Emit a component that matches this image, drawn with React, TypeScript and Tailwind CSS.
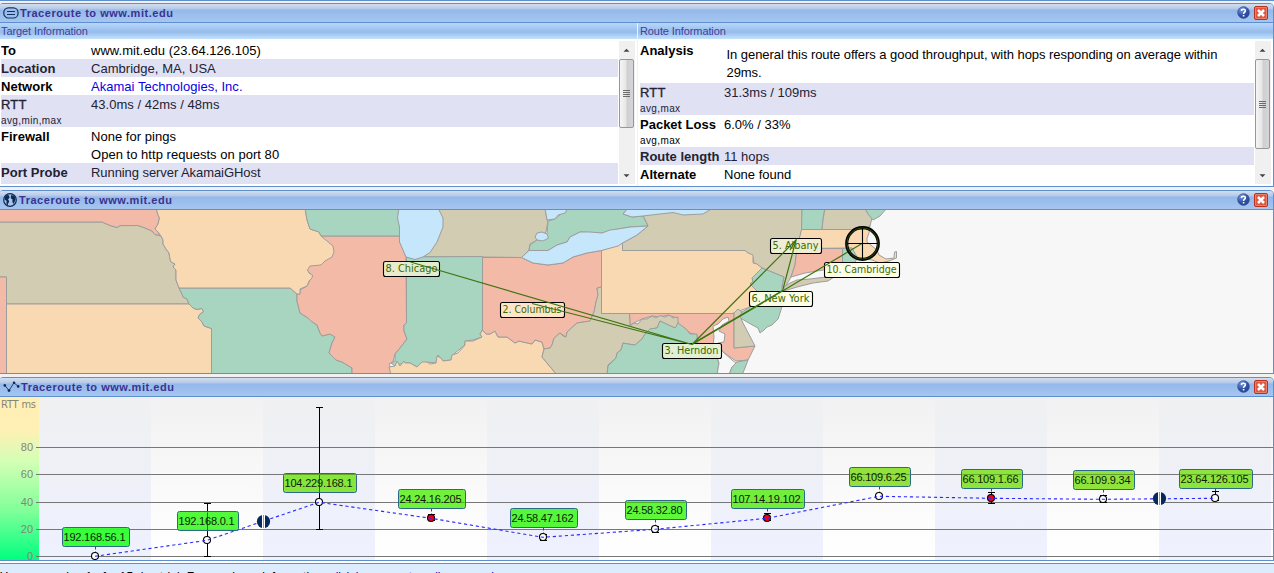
import React from "react";

const HelpIcon = () => (
  <svg width="13" height="13" viewBox="0 0 13 13">
    <defs>
      <radialGradient id="help" cx="0.35" cy="0.25" r="0.85">
        <stop offset="0" stopColor="#7d9bdc" />
        <stop offset="0.6" stopColor="#2f4fa5" />
        <stop offset="1" stopColor="#28418c" />
      </radialGradient>
    </defs>
    <circle cx="6.5" cy="6.5" r="5.9" fill="url(#help)" stroke="#41598f" strokeWidth="0.6" />
    <path d="M4.4 4.9C4.5 2.7 8.5 2.7 8.4 4.9C8.3 6.2 6.6 6.1 6.6 7.9" fill="none" stroke="#fff" strokeWidth="1.5" />
    <rect x="5.8" y="9" width="1.6" height="1.5" fill="#fff" />
  </svg>
);

const CloseIcon = () => (
  <svg width="14" height="14" viewBox="0 0 14 14">
    <rect x="0.5" y="0.5" width="13" height="13" rx="1.5" fill="#dc5a44" stroke="#b8321c" />
    <rect x="1.5" y="1.5" width="11" height="11" rx="0.5" fill="none" stroke="#ee9a86" strokeOpacity="0.6" />
    <path d="M4 4L10 10M10 4L4 10" stroke="#fff" strokeWidth="2.5" />
  </svg>
);

const ListIcon = () => (
  <svg width="16" height="12" viewBox="0 0 16 12" fill="none" stroke="#16335f" strokeWidth="1.2">
    <rect x="0.8" y="0.8" width="14.2" height="10.2" rx="4.6" />
    <path d="M4 4.5H12M4 7.5H12" strokeWidth="1" />
  </svg>
);

const GlobeIcon = () => (
  <svg width="14" height="14" viewBox="0 0 14 14">
    <circle cx="7" cy="7" r="6.3" fill="#a9c6ee" stroke="#0d2a55" strokeWidth="1.2" />
    <path d="M1.6 4L4 2L6.2 2.6L6.5 4.8L5 6.4L6.3 8.2L5.2 10.6L4.6 12.4L3.4 10.4L3.6 8L1.6 6.4Z" fill="#0d2a55" />
    <path d="M8 2L11.4 3L12.6 6L11.6 9L10.2 11L9.3 8.4L9.6 6.4L7.8 5.2Z" fill="#0d2a55" />
  </svg>
);

const ChartIcon = () => (
  <svg width="17" height="12" viewBox="0 0 17 12">
    <path d="M1.8 4.4L6 9.5L11 1.8L15.3 5.4" fill="none" stroke="#16335f" strokeWidth="0.9" />
    <g fill="#0d2a55">
      <circle cx="1.8" cy="4.4" r="1.3" />
      <circle cx="6" cy="9.6" r="1.4" />
      <circle cx="11" cy="1.8" r="1.3" />
      <circle cx="15.2" cy="5.4" r="1.3" />
    </g>
  </svg>
);

const Header = ({ icon, gap }: { icon: React.ReactNode; gap: string }) => (
  <div className="flex h-[19px] shrink-0 items-center border-b border-[#5f8fce] bg-[linear-gradient(to_bottom,#d3dff1_0px,#b4c8e8_5px,#93b8ea_6px,#a6c6f0_18px)] pl-[3px] pr-[5px]">
    {icon}
    <span className={`${gap} pt-px text-[11px] font-bold leading-[17px] tracking-[0.53px] text-[#3b3290]`}>Traceroute to www.mit.edu</span>
    <span className="ml-auto flex items-center gap-[4px] pb-px">
      <HelpIcon />
      <CloseIcon />
    </span>
  </div>
);

const Panel = ({ icon, gap, height, children }: { icon: React.ReactNode; gap: string; height: string; children: React.ReactNode }) => (
  <section className={`${height} flex shrink-0 flex-col overflow-hidden rounded-tl-[3px] rounded-tr-[5px] border-b border-r border-t border-[#5f8fce]`}>
    <Header icon={icon} gap={gap} />
    {children}
  </section>
);

const ScrollBar = ({ thumb }: { thumb: string }) => (
  <div className="flex h-[143px] w-[16px] shrink-0 flex-col items-start bg-[#f0f0f0]">
    <div className="flex h-[18px] w-[15px] items-center justify-center">
      <svg width="7" height="4" viewBox="0 0 7 4"><path d="M0.5 3.8L3.5 0.8L6.5 3.8Z" fill="#444" /></svg>
    </div>
    <div className={`${thumb} flex w-[15px] flex-col items-center justify-center gap-[1px] rounded-[2px] border border-[#979797] bg-[linear-gradient(to_right,#f5f5f5_0,#e7e7e8_45%,#cfcfd2_55%,#d6d6da_100%)]`}>
      {[0, 1, 2, 3].map((i) => <div key={i} className="h-px w-[7px] bg-[#6c6c6c]" />)}
    </div>
    <div className="mt-auto flex h-[17px] w-[15px] items-center justify-center">
      <svg width="7" height="4" viewBox="0 0 7 4"><path d="M0.5 0.2L3.5 3.2L6.5 0.2Z" fill="#444" /></svg>
    </div>
  </div>
);

type RowProps = { label: string; sub?: string; bold?: boolean; dark?: boolean; h: string; col: string; children: React.ReactNode };
const Row = ({ label, sub, bold = true, dark, h, col, children }: RowProps) => (
  <div className={`${h} flex shrink-0 overflow-hidden pt-px ${dark ? "bg-[#e0e1f3] text-[#222233]" : "text-black"}`}>
    <div className={`${col} shrink-0 whitespace-nowrap`}>
      <div className={`leading-[18px] ${bold ? "font-bold" : "tracking-[0.2px] [-webkit-text-stroke:0.3px]"}`}>{label}</div>
      {sub && <div className="text-[10px] leading-[14px] tracking-[0.38px]">{sub}</div>}
    </div>
    <div className="leading-[18px]">{children}</div>
  </div>
);

const SubHeader = ({ children }: { children: React.ReactNode }) => (
  <div className="h-[16px] shrink-0 bg-[linear-gradient(to_bottom,#b7d6fb_0,#9bc0ed_48%,#97bdec_58%,#c4e2fd_100%)] text-[11px] leading-[16px] tracking-[-0.1px] text-[#433f9c]">{children}</div>
);

const P = "#f4baa8", O = "#f9d9b2", K = "#d2ccb2", G = "#a8d5bf", W = "#c5e6fb", S = "#f7f7f7";
const regions: [string, string][] = [
  [K, "-2,222 102,222 110,225.5 117,227.5 120,225.6 138,225.5 145,228 152,231 155,234.5 161,236 163,240 163,244 166,249 169,253 170,259 171,262 175,264 173,267 176,270 176,280 179,288 182,294 183,297 187,299 189,304 6.5,304 6.5,277 -2,277"],
  [P, "-2,208 156,208 158,215 159.5,218 158,224 155,229 158,232 160,235.5 155,234.5 152,231 145,228 138,225.5 120,225.6 117,227.5 110,225.5 102,222 -2,222"],
  [P, "-2,277 6.5,277 6.5,375 -2,375"],
  [O, "6.5,304 189,304 193,308 197,309.5 202,308.5 203.5,312 200,314 198,318 202,322 204,326 211.5,328.5 211.5,375 6.5,375"],
  [G, "179,288 290,288 297,294 297,301 300,313 308,318 311,321 317,325 320,333 322,336 330,334 335,337 332,343 329,353 336,360 342,362 352,368 352,375 211.5,375 211.5,328.5 204,326 202,322 198,318 200,314 203.5,312 202,308.5 197,309.5 193,308 189,304 187,299 183,297 182,294"],
  [P, "321,236 399.5,236 400,242 406,257 406.5,323 404,325 404,331 407,339 400,348 395,354 393,362 389,364 391,368 391,375 352,375 352,368 342,362 336,360 329,353 332,343 335,337 330,334 322,336 320,333 317,325 311,321 308,318 300,313 297,301 297,294 300,294 300,290 307,286 312,276 307,270 309,266"],
  [O, "156,208 305,208 307,220 310,229 319,232 321,236 327,241 333,246 334,252 332,257 325,261 321,265 310,266 307.5,270 309,273 312.5,275 312,278 309,281 307,286 300,289 300,294 297,294 290,288 179,288 176,280 176,270 173,267 175,264 171,262 170,259 169,253 166,249 163,244 163,240 161,236 158,232 155,229 158,224 159.5,218 158,215"],
  [G, "305,208 400,208 400,236 321,236 319,232 310,229 307,220"],
  [K, "430,208 545,208 547,220 548,221 546,232 537,240 530,244 529,250 521.5,257.5 482,257 406,256.5"],
  [G, "406.5,257 482.5,256.5 482.5,330 480,334 482,337 473,340 465,341 465,345 455,353 451,360 443,361 438,355 436,363 427,362 417,367 410,363 403,363 395,366 391,363 395,361 395,354 400,348 407,339 404,331 404,325 406.5,323"],
  [O, "391,375 389,367 395,366 397,361 400,366 404,361 405,363 410,363 417,367 422,362 427,362 430,364 436,363 437,356 441,358 443,361 451,360 452,355 458,353 465,345 465,341 473,341 482,337 480,334 482.5,330 486,334 490,334 495,331 498,337 507,337 515,343 519,341 523,342 532,344 535,340 542,342 544,349 542,357 557,375"],
  [P, "482.5,257.5 521.5,257.5 533,263 548,265 563,263 573,257 587,253 601.5,250.5 601.5,287 597,288 598,295 596,302 594,312 590,321 577,323 567,332 566,337 560,333 554,338 552,345 550,348 544,349 542,342 535,340 532,344 523,342 519,341 515,343 507,337 498,337 495,331 490,334 486,334 482.5,330"],
  [P, "629.5,313.5 734,313.5 734,348 755,346 748,360 736,361 723,352 715,357 698,346 697,335 690,333 685,328 678,325 677,318 668,315 660,317 652,316 642,319 630,325"],
  [K, "544,349 550,348 552,345 554,338 560,333 563,336 566,337 567,332 577,323 590,321 594,312 596,302 598,295 597,288 601.5,287 601.5,313.5 629.5,313.5 630,326 634,323 638,324 642,319 647,319 652,316 656,318 660,315.5 665,317 669,315 673,318 678,317 678,325 675,328 660,321 657,328 650,329 645,334 642,339 635,345 628,344 623,343 621,350 617,353 616,358 608,365 607,375 557,375 542,357"],
  [G, "660,321 675,328 678,323 682,326 686,329 690,334 697,334 697,343 705,353 717,358 719,363 717,375 607,375 608,366 616,358 617,353 621,350 623,343 628,344 635,345 642,339 645,334 650,329 657,328"],
  [K, "622.5,243 637,235 648,226 643,216 673,208 802,208 802,229 797,248 795,265 791,277 784,289 782,286 784,277 762,268 754,263 753,257 745,250.5 622.5,250.5"],
  [O, "601.5,250.5 622.5,243 622.5,250.5 745,250.5 748,253 753,255 753,263 757,264 762,268 757,273 752,278 753,281 750,284 755,289 758,292 753,300 750,307 742,310 737,312 732,313.5 601.5,313.5"],
  [G, "762,268 784,277 782,286 782,291 784,300 780,313 778,319 772,325 767,327 764,330 760,333 758,328 747,322 739,317 742,312 750,307 753,300 758,292 755,289 750,284 753,281 752,278 757,273"],
  [K, "734,313 738,309 742,312 740,316 743,323 755,346 734,348"],
  [S, "713,326 718,324 723,319 728,317 729,321 722,325 719,331 725,334 724,342 718,343 723,352 732,360 736,363 732,367 729,375 717,375 719,363 717,357 713,347 714,337"],
  [G, "737,362 748,360 745,368 742,375 729,375 732,367"],
  [G, "802,208 825,208 823,220 822,229.5 801.5,229.5"],
  [K, "825,208 865,208 868,214 872,218 870,226 862,229.5 822,229.5 823,220"],
  [G, "865,208 887,208 880,216 873,220 868,214"],
  [O, "801.5,229.5 862,229.5 870,226 869,233 867,238 867,242 872,246 877,250 879,255 886,259 894,258 894.5,252 896.5,251.5 896.5,258 889,261 880,263 872,260 865,259 856,260 852,248 797,248.5"],
  [P, "797,248.5 842.5,248.5 842.5,264 823,270 805,273 791,277 795,265"],
  [G, "842.5,248.5 852,248 857,257 855,263 842.5,266"],
  [K, "784,287 790,283 797,280 810,279 826,277 837,275 828,281 813,283 797,287 784,291"],
  [G, "567,208 628,208 623,214 632,217 643,216 648,226 630,227 618,229 602,233 580,232 570,237 567,242 557,245 548,250.5 529,250.5 530,245 537,240 547,234 548,221 555,219 560,215"],
  [W, "545,208 547,220 555,219 558,215 565,213 568,208"],
  [W, "537,233 542,232 547,234 548.5,238 543,241 537,240 535,237"],
  [W, "628,208 623,214 632,217 643,216 673,212.5 683,215 703,214 713,208"],
  [W, "521.5,257.5 529,250.5 548,250.5 557,245 567,242 570,237 580,232 590,232 602,233 610,230 618,229 630,227 648,226 637,235 622.5,243 618,246 601.5,250.5 587,253 573,257 563,263 548,265 533,263"],
  [W, "399,208 397.5,218 399.5,227 399.5,242 403,250 406,257 415,259.5 423,257 430,252.5 437,242 443,227 443,218 438,208"],
];

const cities = [
  ["8. Chicago", 383.5, 261.5, 56, 52, "#e6efcf"],
  ["2. Columbus", 500.5, 302.5, 64, 59, "#fde8cc"],
  ["3. Herndon", 662.5, 343.5, 59, 54, "#e6f2d5"],
  ["6. New York", 749.5, 291.5, 63, 58, "#fffee6"],
  ["5. Albany", 770.5, 238.5, 51, 46, "#f1f0d7"],
  ["10. Cambridge", 824.5, 262.5, 75, 70, "#fffee6"],
] as const;

const RouteMap = () => (
  <svg className="block" width="1273" height="163" viewBox="0 210 1273 163">
    <rect y="210" width="1273" height="163" fill={S} />
    <g stroke="#9d9d9d" strokeWidth="1" strokeLinejoin="round">
      {regions.map(([fill, points], i) => <polygon key={i} points={points} fill={fill} />)}
    </g>
    <g fontFamily="'DejaVu Sans Condensed', 'DejaVu Sans', sans-serif" fontSize="11">
      {cities.map(([name, x, y, w, t, bg]) => (
        <g key={name}>
          <rect x={x} y={y} width={w} height="15" rx="2" fill={bg} fillOpacity="0.92" stroke="#000" strokeWidth="1.1" />
          <text x={x + 2} y={y + 10.5} textLength={t} lengthAdjust="spacingAndGlyphs" fill="#3b6a00">{name}</text>
        </g>
      ))}
    </g>
    <g stroke="#3f7510" strokeWidth="1.2" fill="none">
      <path d="M410.5 262L692 344.5M532 303.5L692 344.5M692 344.5L796 240L782.5 291" />
      <path d="M692 344.5L782.5 291L862 243.5" />
      <path d="M692 344L782.5 290.5M790 250L796 240" />
    </g>
    <circle cx="862.5" cy="243.5" r="15.8" fill="none" stroke="#000" strokeWidth="3.2" />
    <circle cx="862.5" cy="243.5" r="15.6" fill="none" stroke="#34520c" strokeWidth="0.9" />
    <path d="M847 243.5H878M862.5 228V259" stroke="#000" strokeWidth="1.1" />
  </svg>
);

type Hop = { ip: string; x: number; y: number; lx: number; ly: number; w: number; bg: string; red?: boolean; lo?: number; hi?: number };
const hops: Hop[] = [
  { ip: "192.168.56.1", x: 95, y: 556, lx: 62.5, ly: 527.5, w: 67, bg: "#2dff2d" },
  { ip: "192.168.0.1", x: 207, y: 540, lx: 177.5, ly: 511.5, w: 61, bg: "#48fa30", hi: 503.5, lo: 556.5 },
  { ip: "104.229.168.1", x: 319, y: 502, lx: 283.5, ly: 473.5, w: 73, bg: "#82e32f", hi: 407.5, lo: 529.5 },
  { ip: "24.24.16.205", x: 431, y: 518, lx: 398.5, ly: 489.5, w: 67, bg: "#68ef30", hi: 514.5, lo: 520.5, red: true },
  { ip: "24.58.47.162", x: 543, y: 537, lx: 510.5, ly: 508.5, w: 67, bg: "#4af72e", hi: 534.5, lo: 540.5 },
  { ip: "24.58.32.80", x: 655, y: 529, lx: 625.5, ly: 500.5, w: 61, bg: "#55f62e", hi: 526.5, lo: 532.5 },
  { ip: "107.14.19.102", x: 767, y: 518, lx: 731.5, ly: 489.5, w: 73, bg: "#69ed30", hi: 513.5, lo: 520.5, red: true },
  { ip: "66.109.6.25", x: 879, y: 496, lx: 849.5, ly: 467.5, w: 61, bg: "#8cdf31" },
  { ip: "66.109.1.66", x: 991, y: 498, lx: 961.5, ly: 469.5, w: 61, bg: "#88e130", hi: 492.5, lo: 503.5, red: true },
  { ip: "66.109.9.34", x: 1103, y: 499, lx: 1073.5, ly: 470.5, w: 61, bg: "#88e130", hi: 495.5, lo: 502.5 },
  { ip: "23.64.126.105", x: 1215, y: 498, lx: 1179.5, ly: 469.5, w: 73, bg: "#88e130", hi: 491.5, lo: 500.5 },
];
const ticks: [string, number][] = [["80", 447.5], ["60", 474.5], ["40", 502.5], ["20", 529.5], ["0", 556.5]];

const RttChart = () => (
  <svg className="block" width="1273" height="163" viewBox="0 397 1273 163" fontFamily="'Liberation Sans', Arial, sans-serif">
    <defs>
      <linearGradient id="scale" x1="0" y1="0" x2="0" y2="1">
        <stop offset="0" stopColor="#ffefb5" />
        <stop offset="0.2" stopColor="#fff0b4" />
        <stop offset="0.4" stopColor="#d2ffb4" />
        <stop offset="0.7" stopColor="#80ff99" />
        <stop offset="1" stopColor="#00ff7f" />
      </linearGradient>
      <linearGradient id="odd" x1="0" y1="0" x2="0" y2="1">
        <stop offset="0" stopColor="#f0f0f1" />
        <stop offset="1" stopColor="#eef1ff" />
      </linearGradient>
      <linearGradient id="even" x1="0" y1="0" x2="0" y2="1">
        <stop offset="0" stopColor="#f1f1f1" />
        <stop offset="0.65" stopColor="#fbfbfb" />
        <stop offset="1" stopColor="#ffffff" />
      </linearGradient>
    </defs>
    <rect y="397" width="1273" height="163" fill="url(#even)" />
    {hops.map((h, i) => (i % 2 === 0 ? <rect key={i} x={h.x - 56} y="397" width="112" height="163" fill="url(#odd)" /> : null))}
    <rect y="397" width="39" height="163" fill="url(#scale)" />
    <text x="1" y="408" fontSize="11" textLength="35" fill="#858578" fontFamily="'DejaVu Sans Condensed', sans-serif">RTT ms</text>
    {ticks.map(([t, y]) => (
      <g key={t}>
        <path d={`M36 ${y}H1273`} stroke="#777" strokeWidth="1" />
        <text x="33.5" y={y + 3.5} fontSize="11" letterSpacing="0.3" textAnchor="end" fill="#83857a">{t}</text>
      </g>
    ))}
    {hops.map((h) => (
      <path key={h.ip} d={`M${h.x + 0.5} ${h.ly + 19}V${h.y - 4}`} stroke="#25548a" strokeWidth="1" strokeDasharray="3 2" />
    ))}
    {hops.map((h) => h.hi && h.lo ? (
      <path key={h.ip} d={`M${h.x - 3} ${h.hi}H${h.x + 4}M${h.x - 3} ${h.lo}H${h.x + 4}M${h.x + 0.5} ${h.hi}V${h.lo}`} stroke="#000" strokeWidth="1" />
    ) : null)}
    {hops.map((h) => (
      <circle key={h.ip} cx={h.x} cy={h.y} r="3.5" fill={h.red ? "#f0001c" : "#fff"} stroke="#000" strokeWidth="1.1" />
    ))}
    <path d={`M${hops.map((h) => `${h.x} ${h.y + 0.3}`).join("L")}`} fill="none" stroke="#2b2bff" strokeWidth="1.1" strokeDasharray="3.2 2.8" />
    {hops.map((h) => (
      <g key={h.ip}>
        <rect x={h.lx} y={h.ly} width={h.w} height="19" rx="2" fill={h.bg} fillOpacity="0.94" stroke="#2b6a86" strokeWidth="1" />
        {h.ip.startsWith("192.168.0") || h.ip.startsWith("104") ? <path d={`M${h.x + 0.5} ${h.ly + 1}v18`} stroke="#2c6b14" /> : null}
        {h.ly < 474 && <path d={`M${h.lx + 1} 474.5h${h.w - 2}`} stroke="#62a629" />}
        {(h.ly === 489.5 || h.ly === 500.5) && <path d={`M${h.lx + 1} 502.5h${h.w - 2}`} stroke="#4db01d" />}
        <text x={h.lx + 1} y={h.ly + 13.5} fontSize="11" textLength={h.w - 5} fill="#0c1c08">{h.ip}</text>
      </g>
    ))}
    {[[263.5, 521.5], [1159.5, 498.5]].map(([x, y]) => (
      <g key={x}>
        <circle cx={x} cy={y} r="6.6" fill="#06285a" />
        <rect x={x - 1.5} y={y - 7} width="3" height="14" fill="#fff" />
        <path d={`M${x} ${y - 6.5}V${y + 6.5}`} stroke="#8b9ab2" strokeWidth="1" />
      </g>
    ))}
  </svg>
);

export default function App() {
  return (
    <main className="flex h-[573px] w-[1274px] flex-col overflow-hidden border-t border-[#5f8fce] bg-[#f1f1f1] pt-[2px] font-['Liberation_Sans',Arial,sans-serif] text-[13px]">
      <Panel icon={<ListIcon />} gap="ml-px" height="h-[184px]">
        <div className="flex min-h-0 flex-1 bg-white">
          <div className="flex w-[637px] shrink-0 flex-col">
            <SubHeader><span className="pl-px">Target Information</span></SubHeader>
            <div className="flex pl-px pt-[2px]">
              <div className="flex h-[143px] w-[617px] flex-col overflow-hidden tracking-[0.03px]">
                <Row label="To" h="h-[18px]" col="w-[90px]">www.mit.edu (23.64.126.105)</Row>
                <Row label="Location" dark h="h-[18px]" col="w-[90px]">Cambridge, MA, USA</Row>
                <Row label="Network" h="h-[18px]" col="w-[90px]"><a className="text-[#0a00e6]">Akamai Technologies, Inc.</a></Row>
                <Row label="RTT" sub="avg,min,max" bold={false} dark h="h-[32px]" col="w-[90px]">43.0ms / 42ms / 48ms</Row>
                <Row label="Firewall" h="h-[36px]" col="w-[90px]">None for pings<br />Open to http requests on port 80</Row>
                <Row label="Port Probe" dark h="h-[21px]" col="w-[90px]"><span className="tracking-[-0.07px]">Running server AkamaiGHost</span></Row>
              </div>
              <div className="ml-px"><ScrollBar thumb="h-[69px]" /></div>
            </div>
          </div>
          <div className="flex flex-1 flex-col border-l border-[#eef3fa]">
            <SubHeader><span className="pl-[2px]">Route Information</span></SubHeader>
            <div className="flex pl-[2px] pt-[2px]">
              <div className="flex h-[143px] w-[614px] flex-col overflow-hidden">
                <Row label="Analysis" h="h-[42px]" col="w-[86.5px]"><p className="w-[510px] pt-[4px] tracking-[-0.055px]">In general this route offers a good throughput, with hops responding on average within 29ms.</p></Row>
                <Row label="RTT" sub="avg,max" bold={false} dark h="h-[32px]" col="w-[84px]">31.3ms / 109ms</Row>
                <Row label="Packet Loss" sub="avg,max" h="h-[32px]" col="w-[84px]">6.0% / 33%</Row>
                <Row label="Route length" dark h="h-[18px]" col="w-[84px]">11 hops</Row>
                <Row label="Alternate" h="h-[18px]" col="w-[84px]">None found</Row>
              </div>
              <div className="ml-px"><ScrollBar thumb="h-[90px]" /></div>
            </div>
          </div>
        </div>
      </Panel>
      <div className="h-[3px] shrink-0" />
      <Panel icon={<GlobeIcon />} gap="ml-[2px]" height="h-[184px]"><RouteMap /></Panel>
      <div className="h-[3px] shrink-0" />
      <Panel icon={<ChartIcon />} gap="ml-px" height="h-[184px]"><RttChart /></Panel>
      <div className="h-[2px] shrink-0 bg-white" />
      <footer className="h-[10px] shrink-0 overflow-hidden border-t border-[#5f8fce] bg-[#dcebfd]">
        <p className="whitespace-nowrap pt-[5px] text-[12px] leading-[16px] tracking-[0.12px] text-black">
          You are on day 1 of a 15 day trial. For purchase information, <a className="tracking-[-0.15px] text-[#1a00c8]">click here or enter a license code.</a>
        </p>
      </footer>
    </main>
  );
}
